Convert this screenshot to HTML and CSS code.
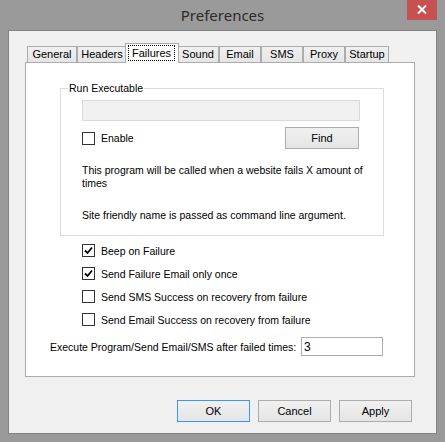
FILE: index.html
```html
<!DOCTYPE html>
<html lang="en">
<head>
  <meta charset="UTF-8" />
  <title>Preferences</title>
  <link rel="stylesheet" href="styles.css">
</head>
<body>

  <div class="window">
    <div class="titlebar">
      <h1 class="title">Preferences</h1>
      <button class="close" aria-label="Close">
        <svg width="10" height="9" viewBox="0 0 10 9"><path d="M1 0.5 L9 8.5 M9 0.5 L1 8.5" stroke="#fff" stroke-width="2"/></svg>
      </button>
    </div>

    <div class="client">
      <div class="tabs">
        <div class="tab tab-wide">General</div>
        <div class="tab tab-wide">Headers</div>
        <div class="tab tab-active"><span class="focus">Failures</span></div>
        <div class="tab">Sound</div>
        <div class="tab">Email</div>
        <div class="tab">SMS</div>
        <div class="tab">Proxy</div>
        <div class="tab tab-startup">Startup</div>
      </div>

      <div class="panel">
        <fieldset class="group">
          <legend>Run Executable</legend>
          <input class="path" disabled />
          <div class="enable-row">
            <label class="check"><span class="box"></span>Enable</label>
            <button class="btn find">Find</button>
          </div>
          <p class="note">This program will be called when a website fails X amount of times</p>
          <p class="note note-gap">Site friendly name is passed as command line argument.</p>
        </fieldset>

        <div class="options">
          <label class="check">
            <span class="box"><svg width="11" height="11" viewBox="0 0 11 11"><path d="M2 5.5 L4.5 8 L9 2.5" stroke="#000" stroke-width="1.8" fill="none"/></svg></span>
            Beep on Failure
          </label>
          <label class="check">
            <span class="box"><svg width="11" height="11" viewBox="0 0 11 11"><path d="M2 5.5 L4.5 8 L9 2.5" stroke="#000" stroke-width="1.8" fill="none"/></svg></span>
            Send Failure Email only once
          </label>
          <label class="check"><span class="box"></span>Send SMS Success on recovery from failure</label>
          <label class="check"><span class="box"></span>Send Email Success on recovery from failure</label>
        </div>

        <div class="retry-row">
          <label for="retries" class="retry-label">Execute Program/Send Email/SMS after failed times:</label>
          <input id="retries" class="retry" value="3" />
        </div>
      </div>

      <div class="actions">
        <button class="btn btn-default">OK</button>
        <button class="btn">Cancel</button>
        <button class="btn">Apply</button>
      </div>
    </div>
  </div>

</body>
</html>
```

FILE: styles.css
```css
* {
  box-sizing: border-box;
}
body {
  margin: 0;
  font-family: "Liberation Sans", Arial, sans-serif;
  font-size: 10.5px;
  color: #000;
}
.window {
  width: 445px;
  height: 442px;
  background: #9a9a9a;
}
.titlebar {
  height: 30px;
  display: grid;
  grid-template-columns: 1fr auto 1fr;
  align-items: start;
}
.title {
  grid-column: 2;
  margin: 0;
  font-family: "Noto Sans", sans-serif;
  font-weight: normal;
  font-size: 15px;
  line-height: 30px;
  color: #2b2b2b;
}
.close {
  grid-column: 3;
  justify-self: end;
  margin-right: 8px;
  width: 30px;
  height: 20px;
  padding: 0 0 2px;
  border: none;
  background: #c75050;
  display: flex;
  align-items: center;
  justify-content: center;
}
.client {
  margin: 0 8px;
  height: 404px;
  background: #f0f0f0;
  border: 1px solid #838383;
  padding: 12px 0 0 16px;
}

/* tabs */
.tabs {
  display: flex;
  align-items: flex-end;
  height: 20px;
  padding-left: 2px;
  margin-bottom: -1px;
  position: relative;
  z-index: 1;
}
.tab {
  width: 42px;
  height: 16px;
  margin-bottom: 1px;
  border: 1px solid #acacac;
  border-bottom: none;
  background: linear-gradient(#f0f0f0, #e5e5e5);
  text-align: center;
  font-size: 11px;
  line-height: 15px;
}
.tab-wide {
  width: 50px;
}
.tab-startup {
  width: 44px;
}
.tab-active {
  width: 54px;
  height: 20px;
  margin: 0 -2px;
  background: #fff;
  position: relative;
  z-index: 2;
}
.focus {
  display: block;
  margin: 1px 3px 0 2px;
  height: 16px;
  border: 1px dotted #000;
  line-height: 14px;
}

/* panel */
.panel {
  width: 390px;
  height: 315px;
  background: #fff;
  border: 1px solid #acacac;
}
.group {
  margin: 19px 0 0 34px;
  width: 324px;
  padding: 0 0 13px 21px;
  border: 1px solid #dcdcdc;
}
.group legend {
  margin-left: -14px;
  padding: 0 1px;
  line-height: 12px;
}
.path {
  display: block;
  margin-top: 6px;
  width: 278px;
  height: 21px;
  border: 1px solid #d9d9d9;
  background: #f0f0f0;
}
.enable-row {
  display: flex;
  justify-content: space-between;
  align-items: center;
  margin-top: 6px;
  width: 277px;
}
.note {
  margin: 15px 0 0;
  width: 295px;
  line-height: 13px;
}
.note-gap {
  margin-top: 19px;
}
.check {
  display: flex;
  align-items: center;
  gap: 6px;
}
.box {
  width: 13px;
  height: 13px;
  border: 1px solid #333;
  background: #fff;
  display: flex;
  align-items: center;
  justify-content: center;
}
.options {
  margin-top: 3px;
  padding-left: 56px;
}
.options .check {
  height: 23px;
}
.retry-row {
  display: flex;
  align-items: center;
  margin-top: 6px;
  padding-left: 24px;
}
.retry-label {
  flex: none;
  width: 251px;
  white-space: nowrap;
}
.retry {
  width: 82px;
  height: 19px;
  border: 1px solid #abadb3;
  padding: 0 2px;
  font: inherit;
  font-size: 12px;
}

/* buttons */
.btn {
  width: 73px;
  height: 22px;
  padding: 0;
  border: 1px solid #acacac;
  background: linear-gradient(#f0f0f0, #e5e5e5);
  font: inherit;
  font-size: 11px;
  color: #000;
}
.find {
  width: 74px;
}
.btn-default {
  border-color: #3399ff;
}
.actions {
  display: flex;
  justify-content: flex-end;
  gap: 8px;
  margin-top: 23px;
  padding-right: 24px;
}
```
